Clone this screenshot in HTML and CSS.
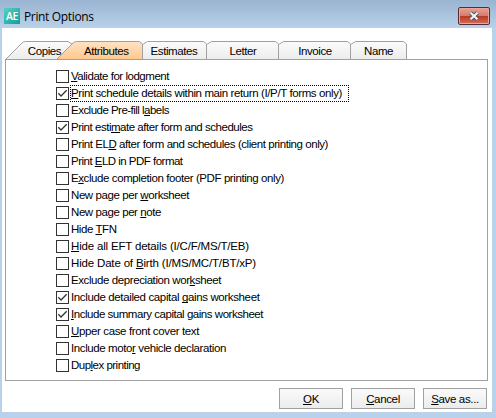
FILE: index.html
```
<!DOCTYPE html>
<html lang="en">
<head>
<meta charset="utf-8">
<title>Print Options</title>
<link rel="stylesheet" href="styles.css">
</head>
<body>
<div class="window">
  <header class="titlebar">
    <span class="app-icon">AE</span>
    <h1 class="title">Print Options</h1>
    <button class="close" aria-label="Close">
      <svg width="12" height="10" viewBox="0 0 12 10"><path d="M2.5 1.8 L9.5 8.2 M9.5 1.8 L2.5 8.2" stroke="#4f5666" stroke-width="4.2"/><path d="M2.500 1.800 L9.500 8.200 M9.500 1.800 L2.500 8.200" stroke="#f4f4f4" stroke-width="2.2"/></svg>
    </button>
  </header>
  <main class="content">
    <nav class="tabs">
      <svg class="tab-shapes" width="402" height="19" viewBox="0 0 402 19">
        <defs>
          <linearGradient id="plain" x2="0" y2="1"><stop stop-color="#fbfbfb"/><stop offset="1" stop-color="#ececec"/></linearGradient>
          <linearGradient id="active" x2="0" y2="1"><stop stop-color="#ffe3c4"/><stop offset="1" stop-color="#ffc88e"/></linearGradient>
        </defs>
        <g fill="url(#plain)" stroke="#a0a0a0">
          <path d="M345.5 18.5V3.5L350.500 .5H398.500L401.500 3V18.500"/>
          <path d="M273.500 18.500V3.500L278.500 .5H342.500L345.500 3V18.500"/>
          <path d="M201.500 18.500V3.500L206.500 .5H270.500L273.500 3V18.500"/>
          <path d="M137.500 18.500V3.500L142.500 .5H198.500L201.500 3V18.500"/>
          <path d="M.5 18.500L17 2Q18.500 .5 20.500 .5H63L67 3L52 18.500"/>
          <path fill="url(#active)" d="M51.500 18.500L68 2Q69.500 .5 71.500 .5H134.500L137.500 3V18.500"/>
          <path d="M0 18.500H402"/>
        </g>
      </svg>
      <span class="tab copies">Copies</span>
      <span class="tab attributes">Attributes</span>
      <span class="tab estimates">Estimates</span>
      <span class="tab letter">Letter</span>
      <span class="tab invoice">Invoice</span>
      <span class="tab name">Name</span>
    </nav>
    <section class="panel">
      <label class="option"><i class="box"></i><span class="text"><u>V</u>alidate for lodgment</span></label>
      <label class="option"><i class="box checked"></i><span class="focus"><span class="text"><u>P</u>rint schedule details within main return (I/P/T forms only)</span></span></label>
      <label class="option"><i class="box"></i><span class="text">Exclude Pre-fill l<u>a</u>bels</span></label>
      <label class="option"><i class="box checked"></i><span class="text">Print esti<u>m</u>ate after form and schedules</span></label>
      <label class="option"><i class="box"></i><span class="text">Print EL<u>D</u> after form and schedules (client printing only)</span></label>
      <label class="option"><i class="box"></i><span class="text">Print <u>E</u>LD in PDF format</span></label>
      <label class="option"><i class="box"></i><span class="text">E<u>x</u>clude completion footer (PDF printing only)</span></label>
      <label class="option"><i class="box"></i><span class="text">New page per <u>w</u>orksheet</span></label>
      <label class="option"><i class="box"></i><span class="text">New page per <u>n</u>ote</span></label>
      <label class="option"><i class="box"></i><span class="text">Hide <u>T</u>FN</span></label>
      <label class="option"><i class="box"></i><span class="text"><u>H</u>ide all EFT details (I/C/F/MS/T/EB)</span></label>
      <label class="option"><i class="box"></i><span class="text">Hide Date of <u>B</u>irth (I/MS/MC/T/BT/xP)</span></label>
      <label class="option"><i class="box"></i><span class="text">Exclude depreciation wor<u>k</u>sheet</span></label>
      <label class="option"><i class="box checked"></i><span class="text">Include detailed capital <u>g</u>ains worksheet</span></label>
      <label class="option"><i class="box checked"></i><span class="text"><u>I</u>nclude summary capital gains worksheet</span></label>
      <label class="option"><i class="box"></i><span class="text"><u>U</u>pper case front cover text</span></label>
      <label class="option"><i class="box"></i><span class="text">Include moto<u>r</u> vehicle declaration</span></label>
      <label class="option"><i class="box"></i><span class="text">Dup<u>l</u>ex printing</span></label>
    </section>
    <footer class="actions">
      <button class="btn"><u>O</u>K</button>
      <button class="btn"><u>C</u>ancel</button>
      <button class="btn"><u>S</u>ave as...</button>
    </footer>
  </main>
</div>
<script src="script.js"></script>
</body>
</html>
```
FILE: script.js
```
const widths = [98, 271, 98, 181.5, 257, 111.5, 213, 118, 90, 45.5, 178, 185, 150, 188.5, 192, 128, 155, 69];
document.querySelectorAll(".text").forEach((el, i) => {
  const natural = el.getBoundingClientRect().width;
  el.style.letterSpacing = (widths[i] - natural) / el.textContent.length + "px";
});
document.querySelectorAll(".box.checked").forEach((el) => {
  el.innerHTML = '<svg width="11" height="11" viewBox="0 0 11 11"><path d="M1.300 5.300L4 8L9.700 2.300" fill="none" stroke="#333" stroke-width="1.300"/></svg>';
});
```
FILE: styles.css
```
* { box-sizing: border-box; }
body { margin: 0; font: 11.5px "Liberation Sans", Arial, sans-serif; color: #000; }
u { text-decoration: underline; text-decoration-thickness: 1px; text-underline-offset: 1px; text-decoration-skip-ink: none; }
.window { width: 496px; height: 418px; padding: 0 4px 6px 2px; display: flex; flex-direction: column; background: linear-gradient(#99b4d1, #b9d1ea 28px); }
.titlebar { height: 28px; flex: none; display: flex; align-items: flex-start; }
.app-icon { width: 16px; height: 16px; margin: 8px 0 0 2px; background: linear-gradient(135deg, #58d0c4, #129e96); color: #fff; font: 600 10.5px/16px "Open Sans", sans-serif; text-align: center; letter-spacing: -.3px; }
.title { margin: 8px auto 0 4px; font: 12px/17px "Open Sans", sans-serif; letter-spacing: -.35px; }
.close { width: 32px; height: 18px; margin: 7px 2px 0 0; padding: 0; border: 1px solid #572d35; border-radius: 2px; box-shadow: inset 0 0 0 1px #e7a79d; background: linear-gradient(#e6a294, #d67c6c 48%, #b83a25 52%, #d4705d); display: flex; align-items: center; justify-content: center; }
.content { flex: 1; padding: 13px 4px 0 3px; background: #fff; display: flex; flex-direction: column; }
.tabs { position: relative; height: 18px; display: flex; line-height: 20px; }
.tab-shapes { position: absolute; left: 0; top: 0; }
.tab { position: relative; flex: none; text-align: center; letter-spacing: -.4px; white-space: nowrap; }
.copies { width: 79px; }
.attributes { width: 44px; }
.estimates { width: 92px; }
.letter { width: 46px; }
.invoice { width: 98px; }
.name { width: 28px; }
.panel { height: 322px; border: 1px solid #a0a0a0; padding: 8px 0 0 50px; }
.option { height: 17px; display: flex; align-items: center; gap: 2px; }
.box { width: 13px; height: 13px; flex: none; border: 1px solid #333; background: #fff; }
.box svg { display: block; }
.text { line-height: 15px; white-space: nowrap; }
.focus { display: flex; padding-right: 6px; outline: 1px dotted #000; }
.actions { display: flex; justify-content: flex-end; gap: 8px; margin: 7px 1px 0 0; }
.btn { width: 64px; height: 21px; padding: 0; border: 1px solid #a0a0a0; background: linear-gradient(#fafafa, #ececec); font: inherit; letter-spacing: -.35px; color: #000; }
```
